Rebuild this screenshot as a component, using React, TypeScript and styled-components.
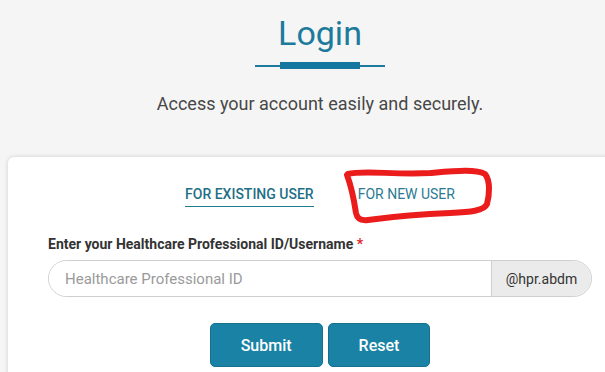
import React from "react";
import styled, { createGlobalStyle } from "styled-components";

const GlobalStyle = createGlobalStyle`
  html, body {
    margin: 0;
    padding: 0;
    background: #f5f5f5;
    overflow: hidden;
    font-family: Roboto, "Liberation Sans", sans-serif;
  }
`;

const Page = styled.main`
  position: relative;
  width: 640px;
  display: flex;
  flex-direction: column;
  align-items: center;
`;

const Title = styled.h1`
  margin: 13px 0 0;
  font-size: 34px;
  line-height: 40px;
  font-weight: 400;
  color: #1c7a9c;
`;

const Divider = styled.div`
  margin-top: 9px;
  width: 130px;
  height: 7px;
  display: flex;
  justify-content: center;
  background: linear-gradient(#1c7a9c, #1c7a9c) center / 100% 2px no-repeat;
`;

const DividerBar = styled.span`
  width: 80px;
  height: 7px;
  background: #1377a0;
`;

const Subtitle = styled.p`
  margin: 24px 0 0;
  font-size: 18px;
  line-height: 21px;
  color: #474747;
`;

const Card = styled.section`
  align-self: flex-start;
  margin: 43px 0 0 8px;
  width: 624px;
  box-sizing: border-box;
  padding: 29px 40px 40px;
  background: #fff;
  border-radius: 6px;
  box-shadow: 0 0 4px rgba(0, 0, 0, 0.16);
`;

const Tabs = styled.nav`
  display: flex;
  justify-content: center;
  gap: 44px;
`;

const Tab = styled.a<{ $active?: boolean }>`
  font-size: 14px;
  line-height: 16px;
  padding-bottom: 4px;
  color: ${(p) => (p.$active ? "#1f6f86" : "#2c7a94")};
  font-weight: ${(p) => (p.$active ? 500 : 400)};
  border-bottom: 1.5px solid ${(p) => (p.$active ? "#1f7b8e" : "transparent")};
  text-decoration: none;
  cursor: pointer;
`;

const Label = styled.label`
  display: block;
  margin-top: 29px;
  font-size: 14px;
  line-height: 17px;
  font-weight: 700;
  color: #333;
`;

const Required = styled.span`
  color: #e0282f;
`;

const InputGroup = styled.div`
  margin-top: 7px;
  display: flex;
  height: 37px;
  box-sizing: border-box;
  border: 1px solid #cfcfcf;
  border-radius: 19px;
  overflow: hidden;
`;

const TextInput = styled.input`
  flex: 1;
  border: none;
  outline: none;
  padding: 0 16px;
  font-family: inherit;
  font-size: 15px;
  color: #333;
  &::placeholder {
    color: #9a9a9a;
  }
`;

const Addon = styled.span`
  width: 99px;
  display: flex;
  align-items: center;
  justify-content: center;
  background: #ebebeb;
  border-left: 1px solid #cfcfcf;
  font-size: 14px;
  color: #333;
`;

const Actions = styled.div`
  margin-top: 26px;
  display: flex;
  justify-content: center;
  gap: 5px;
`;

const Button = styled.button`
  height: 44px;
  padding: 0 30px;
  border: 1px solid #16708e;
  border-radius: 5px;
  background: #1a83a5;
  color: #fff;
  font-family: inherit;
  font-size: 16px;
  font-weight: 500;
  cursor: pointer;
`;

const Annotation = styled.svg`
  position: absolute;
  left: 0;
  top: 0;
  width: 640px;
  height: 372px;
  pointer-events: none;
`;

export default function App() {
  return (
    <>
      <GlobalStyle />
      <Page>
        <Title>Login</Title>
        <Divider>
          <DividerBar />
        </Divider>
        <Subtitle>Access your account easily and securely.</Subtitle>
        <Card>
          <Tabs>
            <Tab $active>FOR EXISTING USER</Tab>
            <Tab>FOR NEW USER</Tab>
          </Tabs>
          <Label>
            Enter your Healthcare Professional ID/Username <Required>*</Required>
          </Label>
          <InputGroup>
            <TextInput placeholder="Healthcare Professional ID" />
            <Addon>@hpr.abdm</Addon>
          </InputGroup>
          <Actions>
            <Button>Submit</Button>
            <Button>Reset</Button>
          </Actions>
        </Card>
        <Annotation viewBox="0 0 640 372">
          <path
            d="M348 174 C 362 170, 395 175, 430 173 C 455 171, 476 169, 485 174 C 491 181, 489 197, 487 204 C 484 211, 470 212, 450 213 C 420 214, 390 217, 368 220 C 360 221, 357 218, 356 213 C 354 200, 352 188, 347 175"
            fill="none"
            stroke="#ea1c1c"
            strokeWidth="6"
            strokeLinecap="round"
            strokeLinejoin="round"
          />
        </Annotation>
      </Page>
    </>
  );
}
